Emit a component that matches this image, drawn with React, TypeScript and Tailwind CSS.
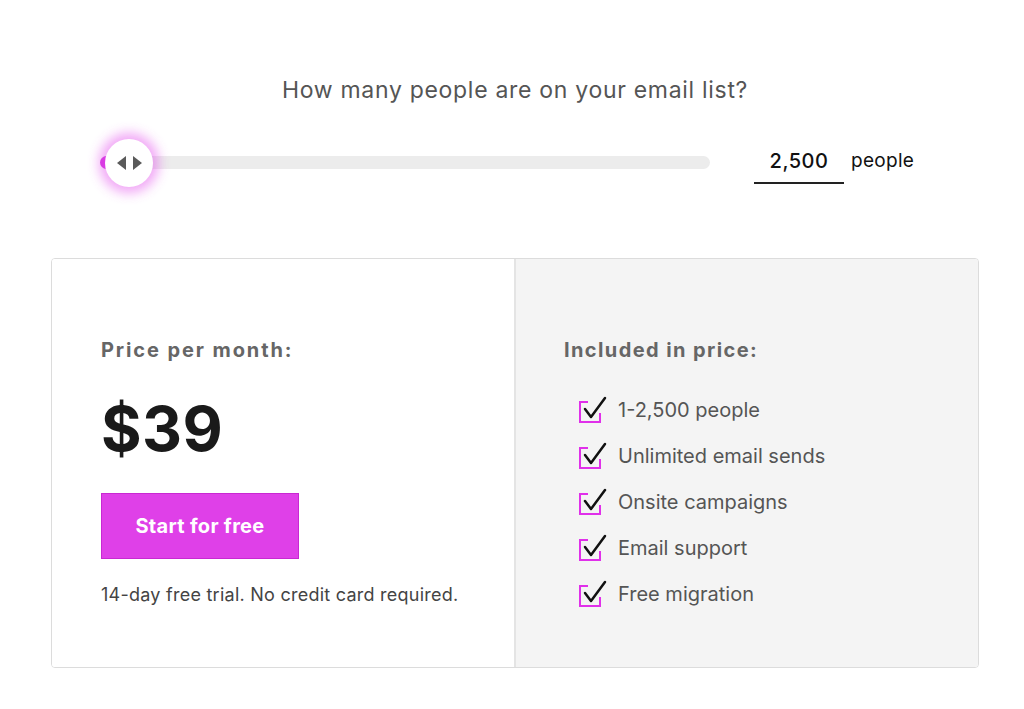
const features = [
  '1-2,500 people',
  'Unlimited email sends',
  'Onsite campaigns',
  'Email support',
  'Free migration',
];

function CheckIcon() {
  return (
    <svg width="30" height="28" viewBox="0 0 30 28" fill="none" className="shrink-0">
      <path d="M10 6H2V26H22V17" stroke="#e030ea" strokeWidth="2" />
      <path d="M7 13L13 21L27 2" stroke="#111" strokeWidth="2.5" strokeLinecap="round" strokeLinejoin="round" />
    </svg>
  );
}

export default function App() {
  return (
    <div className="min-h-screen bg-white font-['Inter',sans-serif]">
      <div className="w-[928px] ml-[51px] pt-[73px]">
        <h2 className="text-center text-[23px] text-[#555] tracking-[0.7px]">
          How many people are on your email list?
        </h2>

        <div className="flex items-center mt-[25px] h-[60px]">
          <div className="relative ml-[49px] w-[610px] h-[13px] rounded-full bg-[#ececec]">
            <div className="absolute left-0 top-0 h-[13px] w-[10px] rounded-l-full bg-[#d63ce0]" />
            <div className="absolute left-[5px] top-1/2 -translate-y-1/2 w-[48px] h-[48px] rounded-full bg-white shadow-[0_0_12px_6px_rgba(224,60,234,0.45)] flex items-center justify-center">
              <svg width="25" height="14" viewBox="0 0 25 14">
                <path d="M0 7L9 0V14Z" fill="#5a5a5a" />
                <path d="M25 7L16 0V14Z" fill="#5a5a5a" />
              </svg>
            </div>
          </div>
          <div className="ml-[44px] mt-[2px] w-[90px] border-b-2 border-[#222] pb-[6px] pt-[2px] text-center text-[20px] font-medium text-[#111] tracking-[0.5px]">
            2,500
          </div>
          <span className="ml-[7px] -mt-[2px] text-[19px] text-[#111] tracking-[0.3px]">people</span>
        </div>

        <div className="mt-[65px] flex h-[410px] rounded-[4px] border border-[#dcdcdc] overflow-hidden">
          <div className="w-[464px] bg-white border-r-2 border-[#e4e4e4] pl-[49px] pt-[76px]">
            <p className="text-[20px] font-bold text-[#666] tracking-[1.9px]">Price per month:</p>
            <p className="mt-[28px] text-[62px] leading-[72px] font-bold text-[#1a1a1a] tracking-[0.5px]">$39</p>
            <button className="mt-[28px] w-[198px] h-[66px] bg-[#df40e8] border border-[#c928d2] text-white text-[20px] font-bold tracking-[0.3px]">
              Start for free
            </button>
            <p className="mt-[22px] text-[18px] text-[#444] tracking-[0.25px]">14-day free trial. No credit card required.</p>
          </div>
          <div className="flex-1 bg-[#f4f4f4] pl-[48px] pt-[76px]">
            <p className="text-[20px] font-bold text-[#666] tracking-[1.4px]">Included in price:</p>
            <ul className="mt-[31px] flex flex-col gap-[18px]">
              {features.map((f) => (
                <li key={f} className="flex items-center gap-[10px] pl-[14px] h-[28px]">
                  <CheckIcon />
                  <span className="text-[20px] text-[#555]">{f}</span>
                </li>
              ))}
            </ul>
          </div>
        </div>
      </div>
    </div>
  );
}
